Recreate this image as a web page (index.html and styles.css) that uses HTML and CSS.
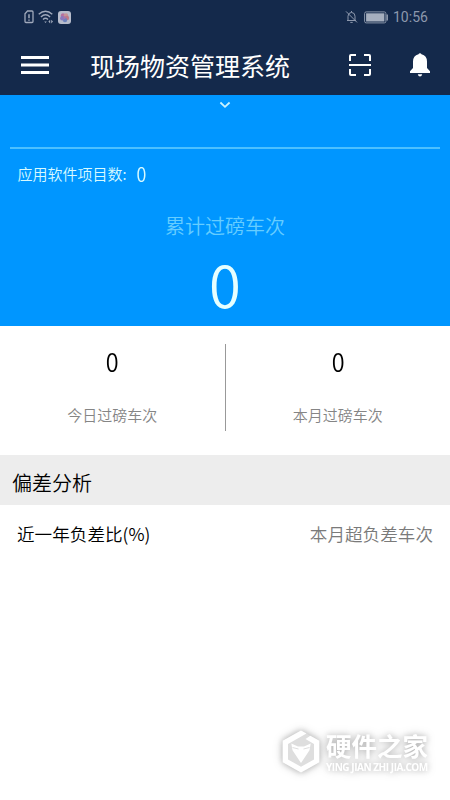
FILE: index.html
```html
<!DOCTYPE html>
<html lang="zh-CN">
<head>
<meta charset="utf-8">
<title>现场物资管理系统</title>
<link rel="stylesheet" href="styles.css">
</head>
<body>
<header class="header">
  <div class="status">
    <div class="status-left">
      <svg width="10" height="14" viewBox="0 0 10 14" fill="none" stroke="#a0a9bb" stroke-width="1.3"><path d="M3.5 1H8a1 1 0 0 1 1 1v9.5a1 1 0 0 1-1 1H2a1 1 0 0 1-1-1V3.8z"/><path d="M5 4.2v4M5 9.4v1.4" stroke-width="1.5"/></svg>
      <svg class="wifi" width="16" height="14" viewBox="0 0 16 14" fill="none" stroke="#a0a9bb" stroke-width="1.4"><path d="M.7 4.3Q7.5-1.7 14.3 4.3M2.9 7Q7.5 2.6 12.1 7M5 9.5Q7.5 7.2 10 9.5"/><path d="M6.2 11.4h2.6l-1.3 1.5zM10.4 11.6l1.8-1.8v3.6zM13.2 9.8l1.8 1.8-1.8 1.8z" fill="#a0a9bb" stroke="none"/></svg>
      <svg class="app" width="13" height="13" viewBox="0 0 13 13"><rect width="13" height="13" rx="3" fill="#b7bccb"/><circle cx="5" cy="4.5" r="2.2" fill="#b5719f"/><circle cx="8" cy="4.5" r="2.2" fill="#c79395"/><circle cx="9" cy="7" r="2.2" fill="#bf7a87"/><circle cx="7" cy="9" r="2.2" fill="#6d83bd"/><circle cx="4.3" cy="7.3" r="2.2" fill="#8b78bd"/><circle cx="6.6" cy="6.6" r="1.3" fill="#a877ac"/></svg>
    </div>
    <div class="status-right">
      <svg class="mute" width="13" height="14" viewBox="0 0 13 14" fill="none" stroke="#8d98ad" stroke-width="1"><path d="M2 10.5h9M3 10.5V6.2Q3 2.7 6.5 2.4 10 2.7 10 6.2v4.3M6.5 2.4V1M5.3 12.4h2.4M1 1.4l11 11"/></svg>
      <svg class="battery" width="25" height="13" viewBox="0 0 25 13"><rect x=".6" y=".9" width="21.3" height="11" rx="1.6" fill="none" stroke="#8b96aa"/><rect x="2.1" y="2.3" width="18.3" height="8.2" fill="#a6afbf"/><path d="M22.4 3.5h1.6v6h-1.6z" fill="#8b96aa"/></svg>
      <span class="clock">10:56</span>
    </div>
  </div>
  <nav class="nav">
    <svg class="menu" width="28" height="18" viewBox="0 0 28 18"><path d="M0 0h28v3H0zM0 7.5h28v3H0zM0 15h28v3H0z" fill="#fff"/></svg>
    <h1 class="title">现场物资管理系统</h1>
    <svg class="scan" width="22" height="22" viewBox="0 0 22 22" fill="none" stroke="#fff" stroke-width="2"><path d="M1 7V2q0-1 1-1h5M15 1h5q1 0 1 1v5M21 15v5q0 1-1 1h-5M7 21H2q-1 0-1-1v-5M0 11h22"/></svg>
    <svg class="bell" width="20" height="25" viewBox="0 0 20 25" fill="#fff"><path d="M8.5 2.2a1.6 1.6 0 0 1 3 0Q17 3.6 17 9.5V16l3 3.2V21H0v-1.8L3 16V9.5Q3 3.6 8.5 2.2zM7.8 22.2h4.4q-.5 2.3-2.2 2.3t-2.2-2.3z"/></svg>
  </nav>
</header>
<section class="hero">
  <svg class="chevron" width="12" height="8" viewBox="0 0 12 8" fill="none" stroke="#c9f3ff" stroke-width="1.8"><path d="M1.4 1.5 6 5.8l4.6-4.3"/></svg>
  <div class="projects"><span>应用软件项目数:</span><span class="projects-count">0</span></div>
  <div class="total-label">累计过磅车次</div>
  <div class="total">0</div>
</section>
<section class="stats">
  <div class="stat"><div class="stat-value">0</div><div class="stat-label">今日过磅车次</div></div>
  <div class="stat-line"></div>
  <div class="stat"><div class="stat-value">0</div><div class="stat-label">本月过磅车次</div></div>
</section>
<h2 class="section-title">偏差分析</h2>
<div class="row"><span>近一年负差比(%)</span><span class="row-note">本月超负差车次</span></div>
<div class="brand">
  <svg width="38" height="43" viewBox="0 0 38 43"><path d="M19 .5 37.3 10.8v21.4L19 42.5.7 32.2V10.8z" fill="#dedede"/><path d="M19 .5 24.5 3.6 6 14v15.5l13 7.2 13-7.2V14l-8.5-5 4.8-3.2 9 5v21.4L19 42.5.7 32.2V10.8z" fill="#fff"/><path d="M9.3 13.5 16 16.5h6l6.7-3-1.2 6.7L19 33l-8.5-12.8z" fill="#fff"/><path d="m10.5 17.5 6 1.5M27.5 17.5l-6 1.5" stroke="#dedede"/></svg>
  <div class="brand-text"><div class="brand-name">硬件之家</div><div class="brand-url">YING JIAN ZHI JIA.COM</div></div>
</div>
</body>
</html>
```
FILE: styles.css
```css
* { box-sizing: border-box; }
body {
  margin: 0;
  height: 800px;
  overflow: hidden;
  position: relative;
  background: #fff;
  color: #000;
  font-family: "Noto Sans CJK SC", sans-serif;
  font-weight: 350;
}
svg { display: block; flex: none; }
h1, h2 { margin: 0; font-weight: 350; }

.header { height: 95px; background: #14294b; }
.status {
  height: 34px;
  padding: 0 22px 0 24px;
  display: flex;
  justify-content: space-between;
  align-items: center;
}
.status-left, .status-right { display: flex; align-items: center; }
.wifi { margin-left: 4px; }
.app { margin-left: 4px; }
.battery { margin: 0 4px 0 6px; }
.clock {
  font: 14px/34px Roboto, sans-serif;
  color: #8d98ad;
  width: 35px;
  white-space: nowrap;
}
.nav {
  height: 61px;
  padding: 0 20px 0 21px;
  display: flex;
  align-items: center;
}
.title {
  margin-left: 41px;
  font-size: 25px;
  font-weight: 400;
  line-height: 61px;
  padding-top: 1px;
  color: #fff;
  white-space: nowrap;
}
.scan { margin-left: 59px; }
.bell { margin-left: auto; }

.hero {
  height: 231px;
  background: #0096ff;
  color: #d8faff;
  text-align: center;
}
.chevron { margin: 0 auto; transform: translateY(6px); }
.projects {
  margin: 44px 10px 0;
  padding: 9px 0 0 7.5px;
  height: 54px;
  border-top: 2px solid #4cc0ff;
  display: flex;
  font-size: 15px;
  line-height: 32px;
}
.projects-count { margin-left: 9px; font-size: 19.5px; transform: scaleX(.92); }
.total-label {
  margin-top: 5px;
  font-size: 20px;
  line-height: 40px;
  color: #66cdff;
}
.total { font-size: 58px; line-height: 75px; color: #e6ffff; }

.stats { height: 129px; display: flex; padding-top: 18px; }
.stat { flex: 1; text-align: center; }
.stat-line { width: 1px; height: 87px; background: #999; }
.stat-value { font-size: 26px; line-height: 34px; transform: scaleX(.9); }
.stat-label { margin-top: 22px; font-size: 15px; line-height: 30px; color: #858585; }

.section-title {
  height: 50px;
  padding-left: 12px;
  background: #ededed;
  font-size: 20px;
  line-height: 55px;
}
.row {
  display: flex;
  justify-content: space-between;
  padding: 0 17px;
  font-size: 17.6px;
  line-height: 58px;
}
.row-note { color: #7a7a7a; }

.brand {
  position: absolute;
  left: 282px;
  top: 730px;
  display: flex;
  color: #fff;
  filter: drop-shadow(0 0 3px rgba(0, 0, 0, .22)) drop-shadow(0 0 5px rgba(0, 0, 0, .16));
}
.brand-text { margin-left: 6px; white-space: nowrap; }
.brand-name { font-size: 25.5px; line-height: 29px; font-weight: 700; }
.brand-url {
  margin-top: 1px;
  font: 700 10px/14px "Open Sans", "Noto Sans", sans-serif;
  letter-spacing: -.45px;
}
```
